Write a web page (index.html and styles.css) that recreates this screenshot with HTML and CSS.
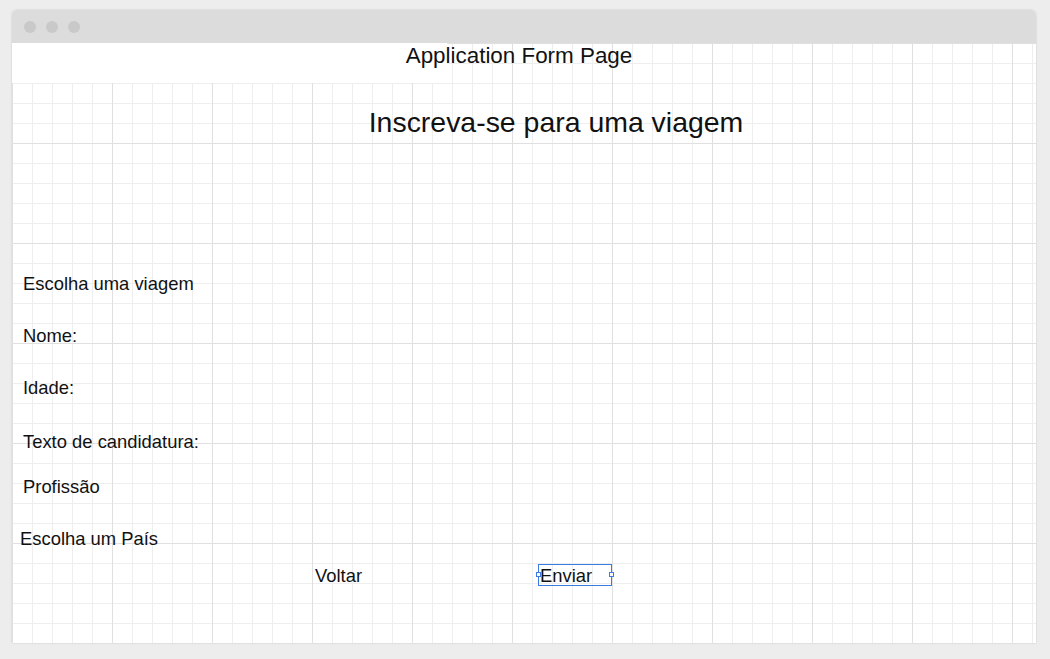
FILE: index.html
```html
<!DOCTYPE html>
<html lang="pt">
<head>
<meta charset="utf-8">
<title>Application Form Page</title>
<link rel="stylesheet" href="styles.css">
</head>
<body>
<div class="window">
  <div class="titlebar">
    <span class="dot"></span><span class="dot"></span><span class="dot"></span>
  </div>
  <div class="canvas">
    <div class="page-title">Application Form Page</div>
    <h1 class="heading">Inscreva-se para uma viagem</h1>
    <div class="form">
      <div class="label l-trip">Escolha uma viagem</div>
      <div class="label l-name">Nome:</div>
      <div class="label l-age">Idade:</div>
      <div class="label l-text">Texto de candidatura:</div>
      <div class="label l-job">Profissão</div>
      <div class="label l-country">Escolha um País</div>
      <div class="actions">
        <div class="btn-back">Voltar</div>
        <div class="btn-send">Enviar<span class="handle h-left"></span><span class="handle h-right"></span></div>
      </div>
    </div>
  </div>
</div>
</body>
</html>
```

FILE: styles.css
```css
html, body {
  margin: 0;
  padding: 0;
}
body {
  background: #ededed;
  font-family: "Liberation Sans", Arial, sans-serif;
  color: #111;
  width: 1050px;
  height: 659px;
  overflow: hidden;
}
.window {
  margin: 10px 0 0 12px;
  width: 1024px;
  height: 633px;
  background: #fff;
  border-radius: 5px 5px 0 0;
  box-shadow: 0 0 2px rgba(0, 0, 0, 0.18);
  display: flex;
  flex-direction: column;
  overflow: hidden;
}
.titlebar {
  height: 33px;
  flex: none;
  background: #dcdcdc;
  display: flex;
  align-items: center;
  gap: 10px;
  padding-left: 12px;
}
.dot {
  width: 12px;
  height: 12px;
  border-radius: 50%;
  background: #c9c9c9;
}
.canvas {
  flex: 1;
  position: relative;
  background-color: #fff;
  background-image:
    linear-gradient(to right, #e0e0e0 1px, transparent 1px),
    linear-gradient(to bottom, #e0e0e0 1px, transparent 1px),
    linear-gradient(to right, #eeeeee 1px, transparent 1px),
    linear-gradient(to bottom, #eeeeee 1px, transparent 1px);
  background-size: 100px 100px, 100px 100px, 20px 20px, 20px 20px;
  background-position: 0 0;
}
.page-title {
  height: 40px;
  font-size: 22.4px;
  line-height: 26px;
  text-align: center;
  padding-right: 10px;
  background: linear-gradient(to right, #fff 435px, transparent 435px);
}
.heading {
  margin: 23px 0 0 0;
  font-weight: normal;
  font-size: 28.45px;
  line-height: 32px;
  text-align: center;
  padding-left: 64px;
}
.form {
  margin-top: 136px;
  display: flex;
  flex-direction: column;
  align-items: flex-start;
}
.label {
  font-size: 18.4px;
  line-height: 20px;
  padding-left: 11px;
}
.l-name { margin-top: 32px; }
.l-age { margin-top: 32px; }
.l-text { margin-top: 34px; }
.l-job { margin-top: 25px; }
.l-country { margin-top: 32px; padding-left: 8px; }
.actions {
  margin-top: 15px;
  display: flex;
  align-items: flex-start;
  padding-left: 303px;
  gap: 176px;
  font-size: 18.4px;
}
.btn-back {
  line-height: 20px;
  margin-top: 2px;
}
.btn-send {
  position: relative;
  width: 71px;
  height: 18px;
  line-height: 18px;
  padding: 2px 0 0 1px;
  border: 1px solid #3b7be6;
}
.handle {
  position: absolute;
  top: 7px;
  width: 3px;
  height: 3px;
  background: #fff;
  border: 1px solid #3b7be6;
}
.h-left { left: -3px; }
.h-right { right: -3px; }
```
